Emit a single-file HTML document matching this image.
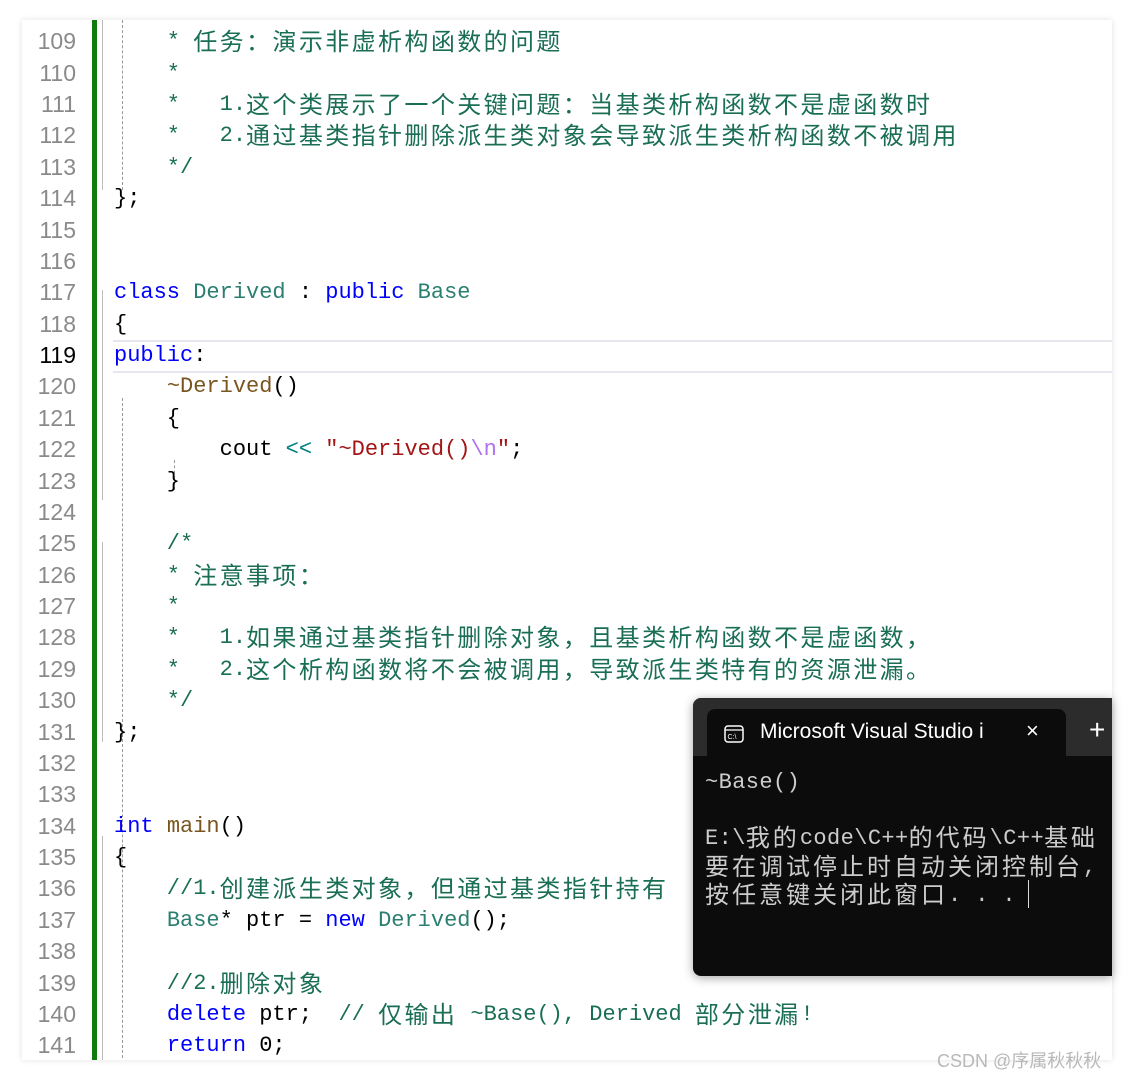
<!DOCTYPE html><html><head><meta charset="utf-8"><style>
body{margin:0;width:1133px;height:1081px;background:#fff;position:relative;overflow:hidden;font-family:"Liberation Mono","Noto Sans CJK SC",monospace;}
.card{position:absolute;left:22px;top:20px;width:1090px;height:1040px;background:#fff;box-shadow:0 0 6px rgba(0,0,0,.12);overflow:hidden}
.ln{position:absolute;left:10px;width:44px;text-align:right;color:#8a8a8a;font-family:"Liberation Sans",sans-serif;font-size:23px;height:31.375px;line-height:31.375px}
.code{position:absolute;left:92px;white-space:pre;font-size:22px;height:31.375px;line-height:31.375px;color:#000}
.c{font-size:24px;letter-spacing:2.4px;font-family:"Noto Sans CJK SC",sans-serif;line-height:0;position:relative;top:3px}
.cm{color:#1a6e55}.kw{color:#0000ff}.ty{color:#2b7f70}.fn{color:#7a5520}.st{color:#a31515}.es{color:#b070f0}.op{color:#008080}
.bar{position:absolute;left:70px;top:0;width:5px;height:1040px;background:#107c10}
.term{position:absolute;left:693px;top:698px;width:419px;height:278px;background:#0c0c0c;border-radius:8px 0 0 8px;box-shadow:0 2px 10px rgba(0,0,0,.35);overflow:hidden}
.tbar{position:absolute;left:0;top:0;width:100%;height:58px;background:#2c2c2c}
.tab{position:absolute;left:14px;top:11px;width:359px;height:50px;background:#0c0c0c;border-radius:8px 8px 0 0}
.tt{position:absolute;top:22px;color:#fff;font-family:"Liberation Sans",sans-serif;font-size:21px}
.out{position:absolute;left:12px;font-size:22px;color:#ccc;white-space:pre;line-height:28.5px;height:28.5px;font-family:"Liberation Mono","Noto Sans CJK SC",monospace;letter-spacing:0.4px}
.out .c{font-size:24px;letter-spacing:3px;top:2px}
</style></head><body>
<div class="card">
<div class="bar"></div>
<div style="position:absolute;left:80px;top:0;width:1px;height:170px;background:#bbb"></div>
<div style="position:absolute;left:91px;top:320px;width:1000px;height:29px;border-top:2px solid #e6e6ee;border-bottom:2px solid #e6e6ee"></div>
<div style="position:absolute;left:80px;top:270px;width:1px;height:210px;background:#bbb"></div>
<div style="position:absolute;left:80px;top:522px;width:1px;height:200px;background:#bbb"></div>
<div style="position:absolute;left:80px;top:816px;width:1px;height:224px;background:#bbb"></div>
<div style="position:absolute;left:100px;top:0;width:0;height:170px;border-left:1px dashed #999"></div>
<div style="position:absolute;left:100px;top:378px;width:0;height:660px;border-left:1px dashed #999"></div>
<div style="position:absolute;left:152px;top:440px;width:0;height:30px;border-left:1px dashed #999"></div>

<div class="ln" style="top:6.3px">109</div><div class="ln" style="top:37.7px">110</div><div class="ln" style="top:69px">111</div><div class="ln" style="top:100.4px">112</div><div class="ln" style="top:131.8px">113</div><div class="ln" style="top:163.2px">114</div><div class="ln" style="top:194.5px">115</div><div class="ln" style="top:225.9px">116</div><div class="ln" style="top:257.3px">117</div><div class="ln" style="top:288.7px">118</div><div class="ln" style="top:320px;color:#000">119</div><div class="ln" style="top:351.4px">120</div><div class="ln" style="top:382.8px">121</div><div class="ln" style="top:414.2px">122</div><div class="ln" style="top:445.5px">123</div><div class="ln" style="top:476.9px">124</div><div class="ln" style="top:508.3px">125</div><div class="ln" style="top:539.7px">126</div><div class="ln" style="top:571px">127</div><div class="ln" style="top:602.4px">128</div><div class="ln" style="top:633.8px">129</div><div class="ln" style="top:665.2px">130</div><div class="ln" style="top:696.5px">131</div><div class="ln" style="top:727.9px">132</div><div class="ln" style="top:759.3px">133</div><div class="ln" style="top:790.7px">134</div><div class="ln" style="top:822px">135</div><div class="ln" style="top:853.4px">136</div><div class="ln" style="top:884.8px">137</div><div class="ln" style="top:916.2px">138</div><div class="ln" style="top:947.5px">139</div><div class="ln" style="top:978.9px">140</div><div class="ln" style="top:1010.3px">141</div>

<div class="code cm" style="top:6.3px">    * <span class="c">任务：演示非虚析构函数的问题</span></div>
<div class="code cm" style="top:37.7px">    *</div>
<div class="code cm" style="top:69px">    *   1.<span class="c">这个类展示了一个关键问题：当基类析构函数不是虚函数时</span></div>
<div class="code cm" style="top:100.4px">    *   2.<span class="c">通过基类指针删除派生类对象会导致派生类析构函数不被调用</span></div>
<div class="code cm" style="top:131.8px">    */</div>
<div class="code" style="top:163.2px">};</div>
<div class="code" style="top:257.3px"><span class="kw">class</span> <span class="ty">Derived</span> : <span class="kw">public</span> <span class="ty">Base</span></div>
<div class="code" style="top:288.7px">{</div>
<div class="code" style="top:320px"><span class="kw">public</span>:</div>
<div class="code" style="top:351.4px">    <span class="fn">~Derived</span>()</div>
<div class="code" style="top:382.8px">    {</div>
<div class="code" style="top:414.2px">        cout <span class="op">&lt;&lt;</span> <span class="st">"~Derived()</span><span class="es">\n</span><span class="st">"</span>;</div>
<div class="code" style="top:445.5px">    }</div>
<div class="code cm" style="top:508.3px">    /*</div>
<div class="code cm" style="top:539.7px">    * <span class="c">注意事项：</span></div>
<div class="code cm" style="top:571px">    *</div>
<div class="code cm" style="top:602.4px">    *   1.<span class="c">如果通过基类指针删除对象，且基类析构函数不是虚函数，</span></div>
<div class="code cm" style="top:633.8px">    *   2.<span class="c">这个析构函数将不会被调用，导致派生类特有的资源泄漏。</span></div>
<div class="code cm" style="top:665.2px">    */</div>
<div class="code" style="top:696.5px">};</div>
<div class="code" style="top:790.7px"><span class="kw">int</span> <span class="fn">main</span>()</div>
<div class="code" style="top:822px">{</div>
<div class="code cm" style="top:853.4px">    //1.<span class="c">创建派生类对象，但通过基类指针持有</span></div>
<div class="code" style="top:884.8px">    <span class="ty">Base</span>* ptr = <span class="kw">new</span> <span class="ty">Derived</span>();</div>
<div class="code cm" style="top:947.5px">    //2.<span class="c">删除对象</span></div>
<div class="code" style="top:978.9px">    <span class="kw">delete</span> ptr;  <span class="cm">// <span class="c">仅输出</span> ~Base(), Derived <span class="c">部分泄漏</span>!</span></div>
<div class="code" style="top:1010.3px">    <span class="kw">return</span> 0;</div>
</div>

<div class="term">
<div class="tbar"></div>
<div class="tab"></div>
<svg style="position:absolute;left:31px;top:27px" width="20" height="18" viewBox="0 0 20 18"><rect x="1" y="1" width="18" height="16" rx="3" fill="none" stroke="#fff" stroke-width="1.5"/><line x1="1" y1="5" x2="19" y2="5" stroke="#fff" stroke-width="1.2"/><text x="3.5" y="14" font-size="7" fill="#fff" font-family="Liberation Sans">C:\</text></svg>
<div class="tt" style="left:67px">Microsoft Visual Studio i</div>
<div class="tt" style="left:333px;font-size:22px;top:20px">×</div>
<div class="tt" style="left:396px;font-size:28px;top:16px;font-weight:300">+</div>
<div class="out" style="top:71px">~Base()</div>
<div class="out" style="top:127px">E:\<span class="c">我的</span>code\C++<span class="c">的代码</span>\C++<span class="c">基础</span></div>
<div class="out" style="top:155.5px"><span class="c">要在调试停止时自动关闭控制台</span>,</div>
<div class="out" style="top:184px"><span class="c">按任意键关闭此窗口</span>. . .</div>
<div style="position:absolute;left:335px;top:182px;width:1px;height:28px;background:#ddd"></div>
</div>
<div style="position:absolute;left:937px;top:1047px;font-family:'Liberation Sans','Noto Sans CJK SC',sans-serif;font-size:18px;color:#b8b8b8">CSDN @序属秋秋秋</div>
</body></html>
